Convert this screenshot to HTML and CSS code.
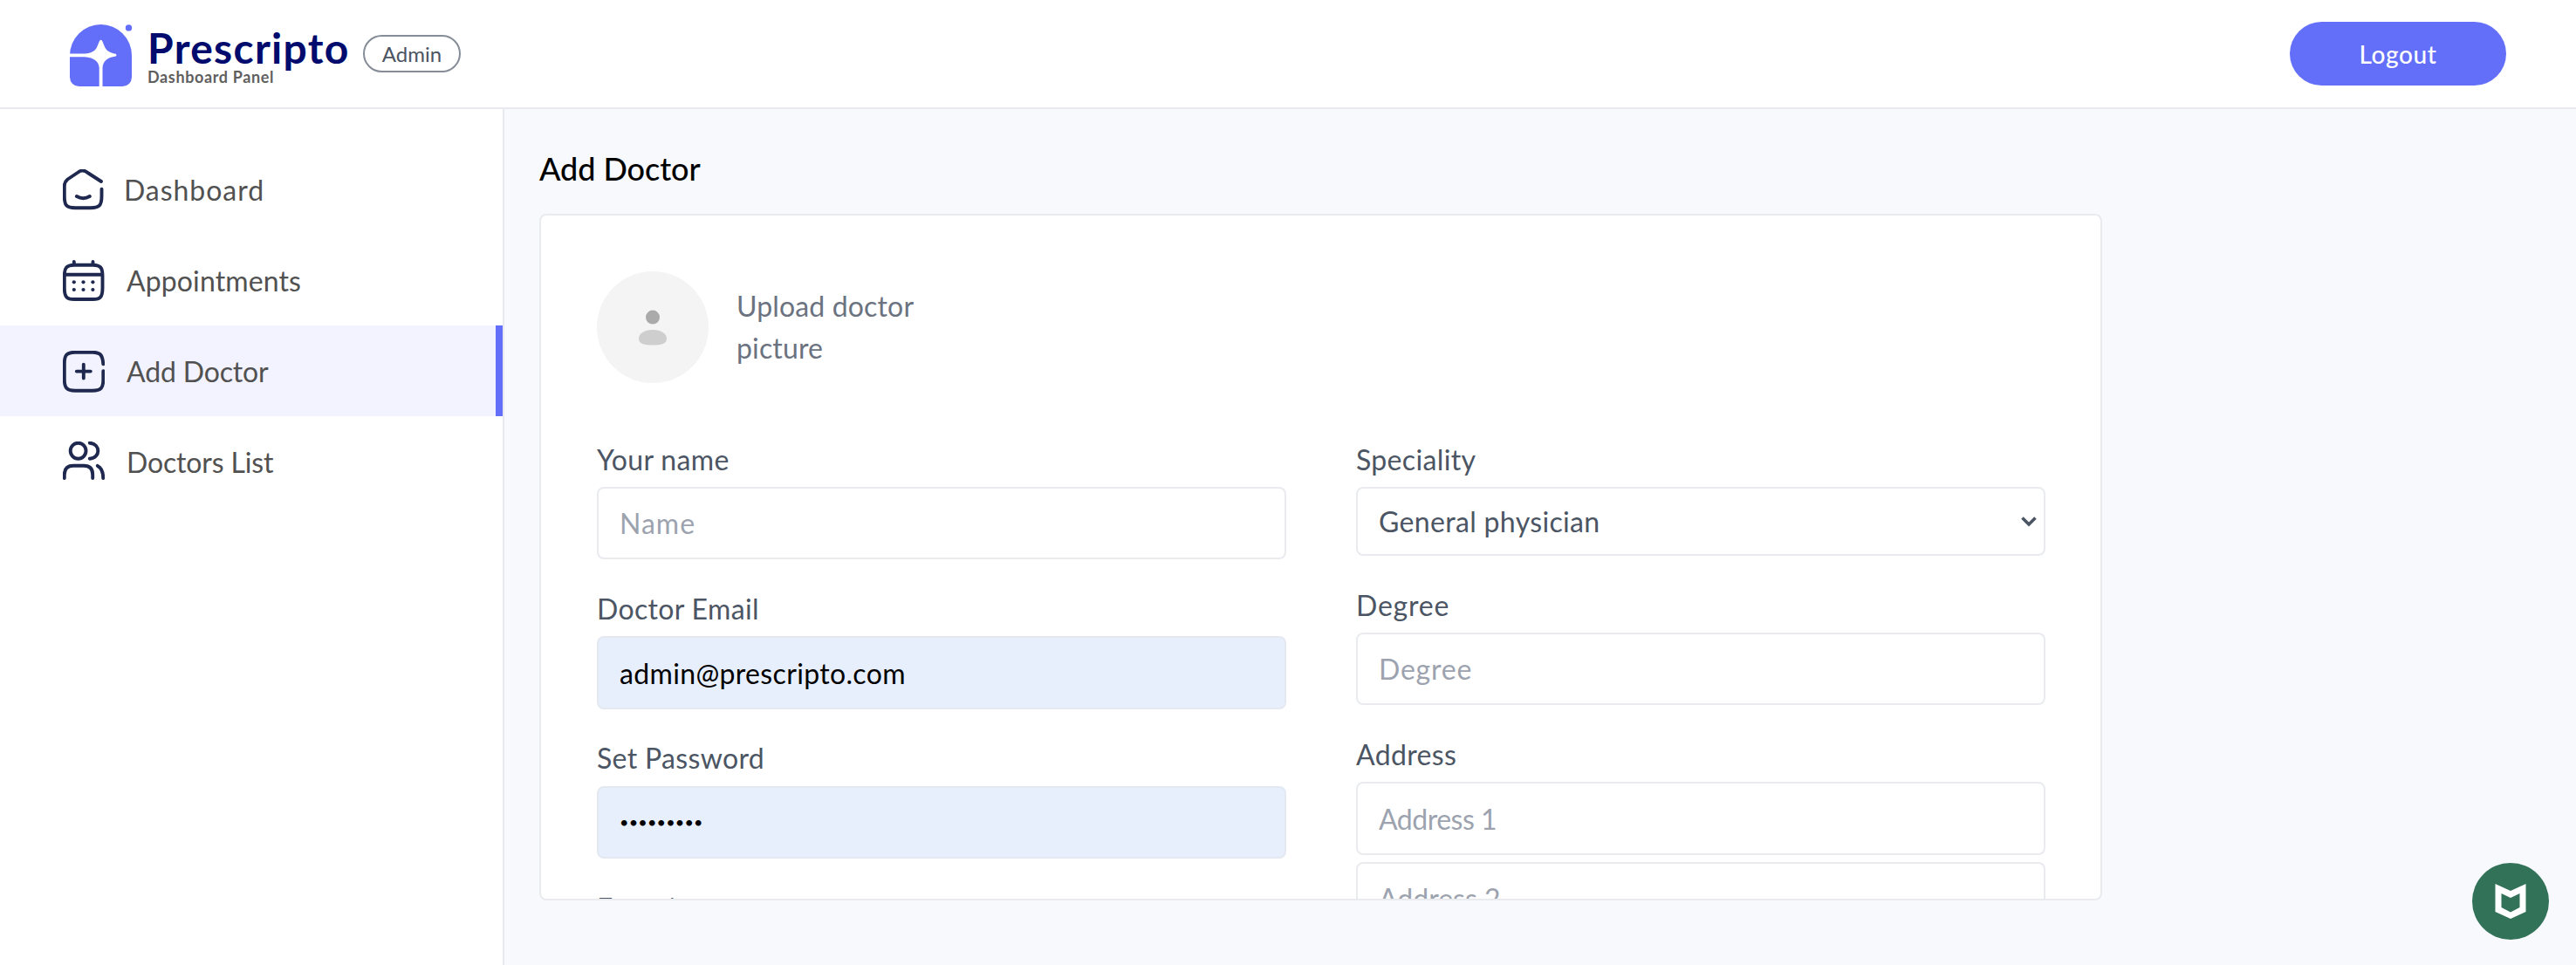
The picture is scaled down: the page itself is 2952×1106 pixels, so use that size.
FILE: index.html
```html
<!DOCTYPE html>
<html lang="en">
<head>
<meta charset="utf-8">
<title>Prescripto Admin - Add Doctor</title>
<link rel="stylesheet" href="styles.css">
</head>
<body>
<header class="header">
  <div class="brand">
    <svg class="logo" viewBox="0 0 72 72" aria-hidden="true">
      <path fill="#636ff8" d="M0 35.500A35.500 35.500 0 0 1 71 35.500V60.500A10.500 10.500 0 0 1 60.500 71H10.500A10.500 10.500 0 0 1 0 60.500Z"/>
      <circle cx="67.500" cy="3.900" r="3.700" fill="#636ff8"/>
      <path fill="#fff" d="M-1 33.400H17C25 33 29.500 30.500 31.500 25L34 19Q35.600 16.400 37.200 19L39.700 25C41.500 30 46 32.500 52.500 33.800Q54.500 35.300 52.500 36.600C43 38 38 42 37.500 50V72H33.700V50C33.500 43 28 38 17 37.300H-1Z"/>
    </svg>
    <div class="wordmark">
      <span class="wordmark-name">Prescripto</span>
      <span class="wordmark-sub">Dashboard Panel</span>
    </div>
    <span class="role">Admin</span>
  </div>
  <button class="logout" type="button">Logout</button>
</header>
<div class="layout">
  <nav class="sidebar">
    <a class="nav-item nav-dashboard">
      <svg class="icon" viewBox="0 0 48 48"><path d="M44 14 28.500 4Q23 -.6 17.500 3.500L5.500 11.500Q1.800 14.500 1.800 19V31C1.800 42 4.500 44 14 44.300H32C41.500 44 44.500 42 44.500 31V22.700M15.900 31Q23.300 35.400 30.800 31"/></svg>
      <span>Dashboard</span>
    </a>
    <a class="nav-item nav-appointments">
      <svg class="icon" viewBox="0 0 48 48"><path d="M13 5.700H34.500C43 6 45.500 8.500 45.500 18V32C45.500 42.500 43 45 34.500 45H13C4.500 45 1.800 42.500 1.800 32V18C1.800 8.500 4.500 6 13 5.700ZM2 16.700H45.500M12.800 2V5M34.500 2V5"/><g class="dots"><circle cx="12.800" cy="25.300" r="2.100"/><circle cx="23.500" cy="25.300" r="2.100"/><circle cx="34.400" cy="25.300" r="2.100"/><circle cx="12.800" cy="34" r="2.100"/><circle cx="23.500" cy="34" r="2.100"/><circle cx="34.400" cy="34" r="2.100"/></g></svg>
      <span>Appointments</span>
    </a>
    <a class="nav-item nav-add active">
      <svg class="icon" viewBox="0 0 48 48"><path d="M46.300 15.400C45.500 4.500 43 2 34 1.700H14C4 2 1.800 5 1.800 15V33C1.800 42.500 4.500 45.500 14 45.800H34C44 45.500 46.300 42.500 46.300 33V23.200M23.800 15.700V31.500M15.800 23.600H31.800"/></svg>
      <span>Add Doctor</span>
    </a>
    <a class="nav-item nav-list">
      <svg class="icon" viewBox="0 0 48 48"><ellipse cx="17.600" cy="10.700" rx="8.900" ry="9"/><path d="M30.800 1.700C43.500 2.500 43.500 18.900 30.800 19.700M1.800 42V38C1.800 31 5.500 27.700 12 27.700H24C30.500 27.700 34.200 31 34.200 38V42M39.800 27.900C44 30 46.200 34 46.200 42"/></svg>
      <span>Doctors List</span>
    </a>
  </nav>
  <main class="main">
    <h1 class="title">Add Doctor</h1>
    <form class="card">
      <div class="upload">
        <svg class="avatar" viewBox="0 0 128 128"><circle cx="64" cy="64" r="64" fill="#f4f4f4"/><circle cx="64" cy="52.600" r="8" fill="#aaa"/><path fill="#cecece" d="M64 67C74 67 80 71.500 80 77C80 83 74 84.600 64 84.600S48 83 48 77C48 71.500 54 67 64 67Z"/></svg>
        <p class="upload-text">Upload doctor<br>picture</p>
      </div>
      <div class="columns">
        <div class="column">
          <label class="field"><span class="label">Your name</span><input class="input ph-name" type="text" placeholder="Name"></label>
          <label class="field"><span class="label">Doctor Email</span><input class="input filled" type="text" value="admin@prescripto.com"></label>
          <label class="field"><span class="label">Set Password</span><input class="input filled password" type="password" value="prescript"></label>
          <label class="field"><span class="label">Experience</span><input class="input" type="text"></label>
        </div>
        <div class="column">
          <label class="field"><span class="label">Speciality</span>
            <span class="select"><span>General physician</span><svg class="chevron" viewBox="0 0 20 14"><path d="M2.500 2.500 10 10 17.500 2.500"/></svg></span>
          </label>
          <label class="field"><span class="label label-degree">Degree</span><input class="input ph-degree" type="text" placeholder="Degree"></label>
          <label class="field"><span class="label">Address</span><input class="input ph-address" type="text" placeholder="Address 1"><input class="input ph-address2" type="text" placeholder="Address 2"></label>
        </div>
      </div>
    </form>
  </main>
</div>
<div class="badge">
  <svg viewBox="0 0 88 88"><circle cx="44" cy="44" r="44" fill="#327258"/><path fill="#fff" fill-rule="evenodd" d="M26.500 24 44 32 61.500 24V56L44 64 26.500 56ZM33.500 35V51L44 56.500 54.500 51V35L44 40Z"/></svg>
</div>
</body>
</html>
```
FILE: styles.css
```css
* { box-sizing: border-box; }
body {
  margin: 0;
  height: 1106px;
  overflow: hidden;
  display: flex;
  flex-direction: column;
  background: #f8f9fd;
  font-family: Lato, "Open Sans", sans-serif;
  font-size: 32px;
  line-height: 48px;
  letter-spacing: .34px;
  color: #000;
}
.header {
  flex: none;
  height: 125px;
  display: flex;
  justify-content: space-between;
  align-items: center;
  padding: 0 80px;
  background: #fff;
  border-bottom: 2px solid #e9eaef;
}
.brand { display: flex; align-items: center; }
.logo { width: 72px; height: 72px; margin: 4px 17px 0 0; overflow: hidden; }
.wordmark { display: flex; flex-direction: column; width: 247px; margin-top: 8px; }
.wordmark-name {
  font-size: 48px;
  line-height: 46px;
  font-weight: 700;
  letter-spacing: 1.3px;
  color: #000b6d;
}
.wordmark-sub {
  font-size: 18px;
  line-height: 21px;
  font-weight: 700;
  letter-spacing: .63px;
  color: #5f5f5f;
}
.role {
  width: 112px;
  height: 43px;
  border: 2px solid #868c98;
  border-radius: 22px;
  font-size: 24px;
  line-height: 39px;
  letter-spacing: 0;
  text-align: center;
  color: #4b5563;
}
.logout {
  width: 248px;
  height: 73px;
  border: 0;
  border-radius: 37px;
  background: #636ff8;
  color: #fff;
  font: 500 28px/73px Lato, sans-serif;
  letter-spacing: .6px;
  padding: 1px 0 0;
}
.layout { flex: 1; min-height: 0; display: flex; }
.sidebar {
  width: 578px;
  padding-top: 40px;
  background: #fff;
  border-right: 2px solid #e9eaef;
}
.nav-item {
  display: flex;
  align-items: center;
  gap: 25px;
  height: 104px;
  padding: 2px 0 0 72px;
  color: #515151;
}
.active { background: #f2f3ff; border-right: 8px solid #636ff8; }
.icon {
  width: 48px;
  height: 48px;
  fill: none;
  stroke: #1f284f;
  stroke-width: 3.9;
  stroke-linecap: round;
  stroke-linejoin: round;
}
.dots { fill: #1f284f; stroke: none; }
.nav-dashboard { gap: 22px; letter-spacing: .95px; }
.nav-appointments { letter-spacing: .12px; }
.nav-add, .nav-list { letter-spacing: -.15px; }
.main { padding: 40px; }
.title {
  margin: 0 0 24px;
  font-size: 36px;
  line-height: 56px;
  font-weight: 500;
  letter-spacing: -.05px;
}
.card {
  width: 1791px;
  height: 787px;
  padding: 64px 63px 0 64px;
  background: #fff;
  border: 2px solid #e9ebee;
  border-radius: 8px;
  overflow: hidden;
}
.upload { display: flex; align-items: center; gap: 32px; margin-bottom: 63px; }
.avatar { width: 128px; height: 128px; }
.upload-text { margin: 0; color: #6b7280; letter-spacing: .15px; }
.columns { display: grid; grid-template-columns: 1fr 1fr; gap: 80px; color: #4b5563; }
.column { display: flex; flex-direction: column; gap: 32px; }
.field { display: flex; flex-direction: column; gap: 8px; }
.label { position: relative; top: .5px; }
.input, .select {
  width: 100%;
  height: 83.4px;
  padding: 0 24px;
  border: 2px solid #e9ebee;
  border-radius: 8px;
  background: #fff;
  font: inherit;
  letter-spacing: inherit;
  color: #000;
}
.input::placeholder { color: #9ca3af; opacity: 1; }
.filled { background: #e8effc; border-color: #e4e8f0; }
.password { font-size: 18px; letter-spacing: .2px; }
.select {
  display: flex;
  align-items: center;
  justify-content: space-between;
  height: 79px;
  padding: 1px 7px 0 24px;
  color: #4b5563;
}
.chevron {
  width: 20px;
  height: 14px;
  fill: none;
  stroke: #4b5563;
  stroke-width: 3.6;
}
.label-degree, .ph-degree { letter-spacing: .8px; }
.ph-name { letter-spacing: 1px; }
.ph-address { letter-spacing: -.5px; }
.ph-address2 { letter-spacing: 0; }
.badge { position: absolute; left: 2833px; top: 989px; width: 88px; height: 88px; }
.badge svg { display: block; }
```
